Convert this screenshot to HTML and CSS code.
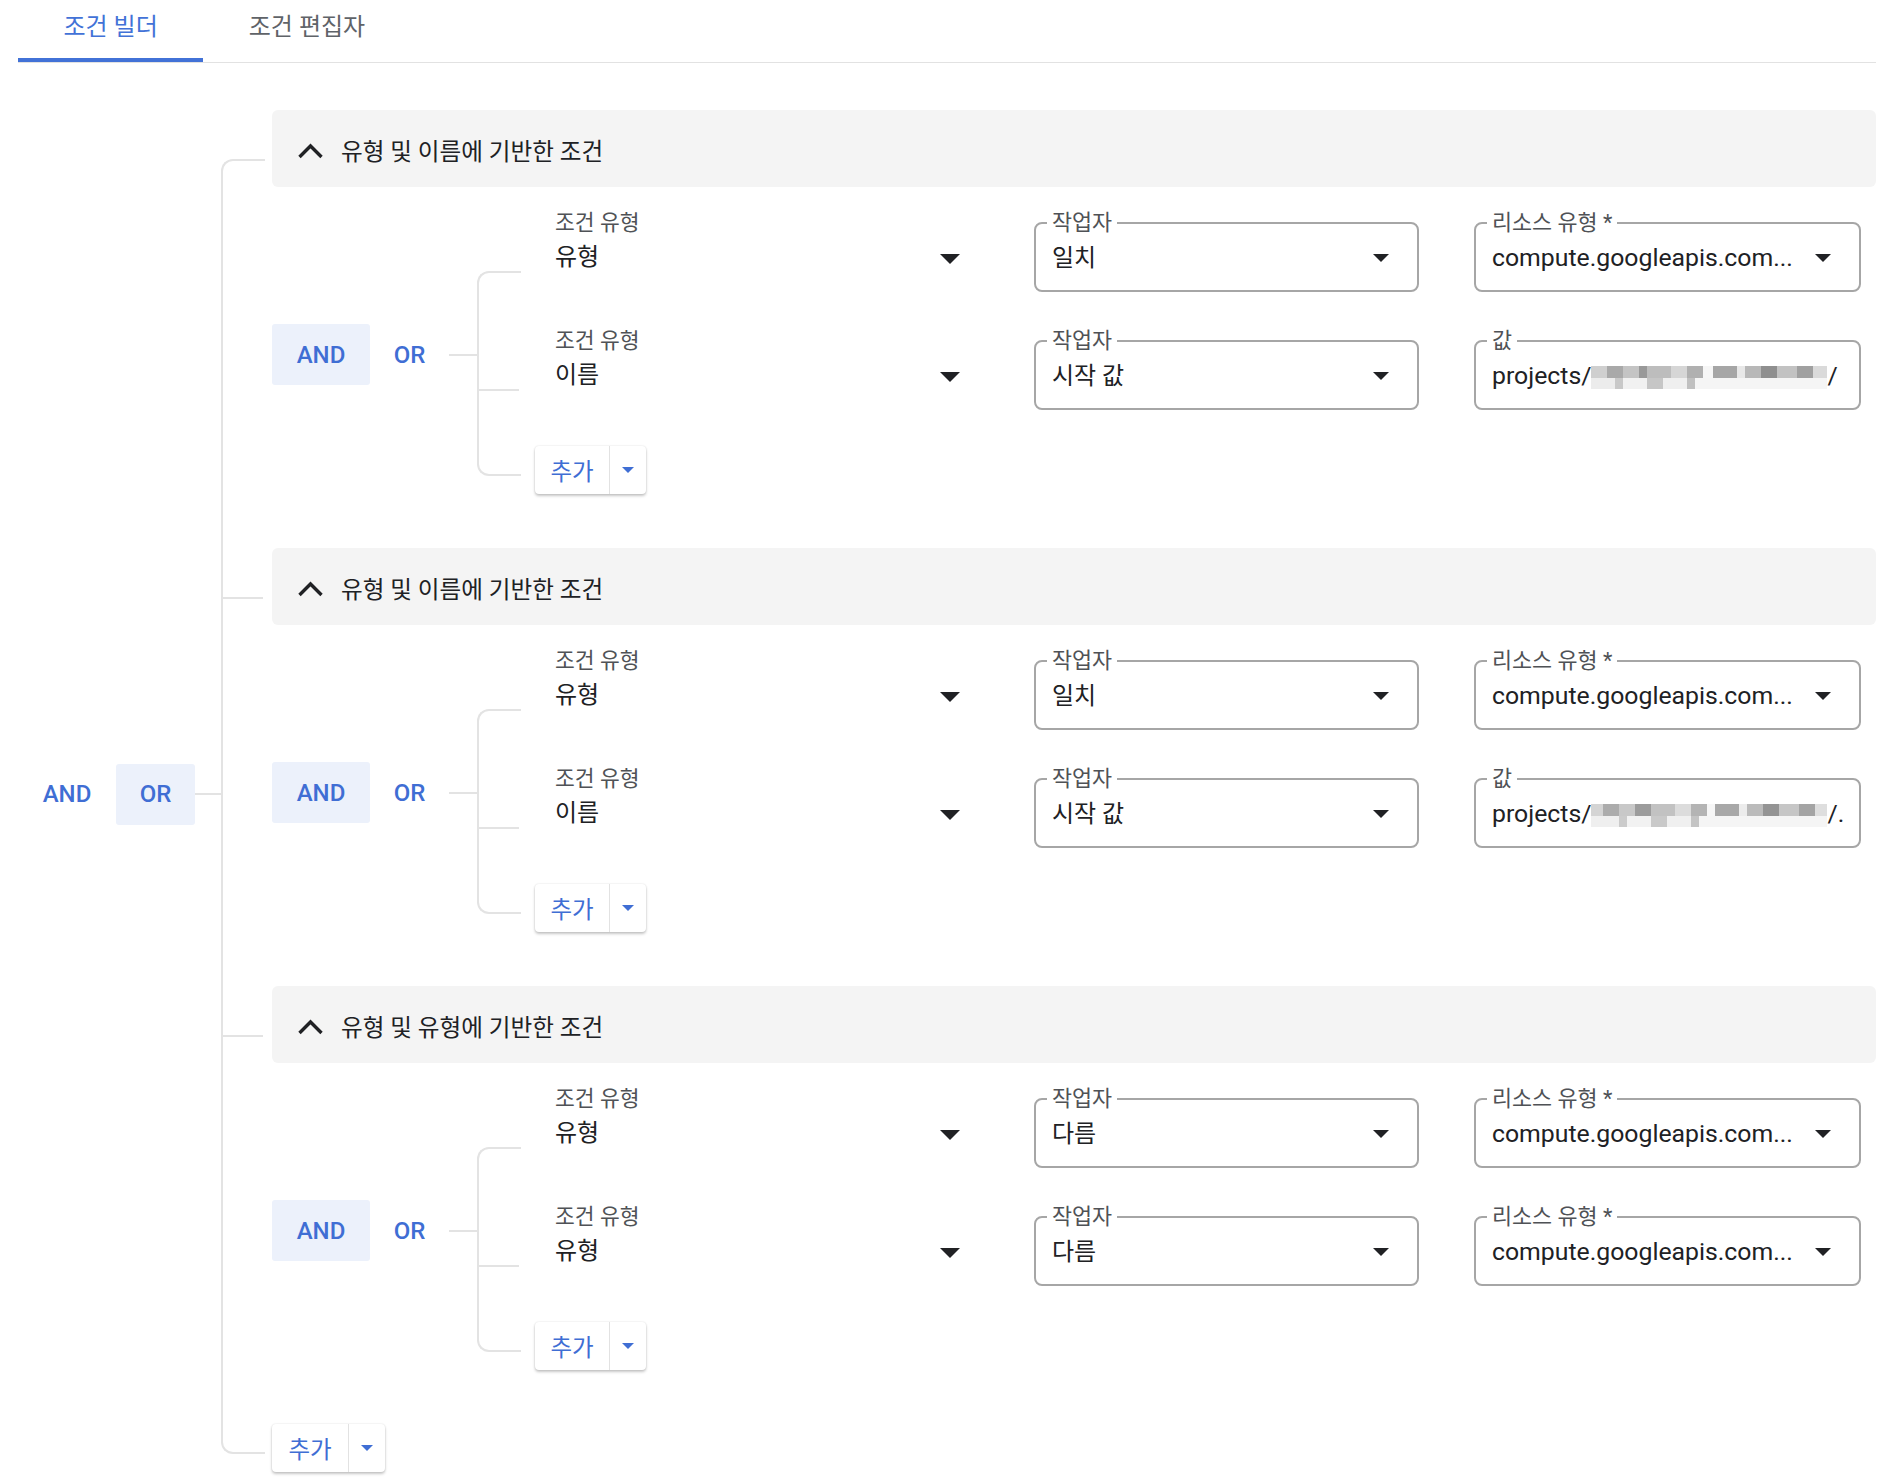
FILE: index.html
```html
<!DOCTYPE html>
<html lang="ko">
<head>
<meta charset="utf-8">
<title>조건 빌더</title>
<link rel="stylesheet" href="styles.css">
</head>
<body>
<div class="page">
  <nav class="tabs">
    <div class="tab active">조건 빌더</div>
    <div class="tab">조건 편집자</div>
  </nav>

  <div class="builder">
    <div class="toggle">
      <span class="op and">AND</span>
      <span class="op or on">OR</span>
    </div>
    <div class="stub stub-outer"></div>

    <div class="tree outer">
      <!-- group 1 -->
      <div class="node group">
        <div class="group-head">
          <svg class="chev" width="27" height="16" viewBox="0 0 27 16"><path d="M2.5 14 L13.5 3 L24.5 14" fill="none" stroke="#202124" stroke-width="3.4"/></svg>
          <span class="title">유형 및 이름에 기반한 조건</span>
        </div>
        <div class="group-body">
          <div class="toggle">
            <span class="op and on">AND</span>
            <span class="op or">OR</span>
          </div>
          <div class="stub stub-inner"></div>
          <div class="tree inner">
            <div class="node row">
              <div class="sel">
                <div class="lbl">조건 유형</div>
                <div class="val-row"><span class="val">유형</span><i class="caret"></i></div>
              </div>
              <fieldset class="field">
                <legend>작업자</legend>
                <div class="val-row"><span class="val">일치</span><i class="caret sm"></i></div>
              </fieldset>
              <fieldset class="field wide">
                <legend>리소스 유형 *</legend>
                <div class="val-row"><span class="val latin">compute.googleapis.com...</span><i class="caret sm"></i></div>
              </fieldset>
            </div>
            <div class="node row">
              <div class="sel">
                <div class="lbl">조건 유형</div>
                <div class="val-row"><span class="val">이름</span><i class="caret"></i></div>
              </div>
              <fieldset class="field">
                <legend>작업자</legend>
                <div class="val-row"><span class="val">시작 값</span><i class="caret sm"></i></div>
              </fieldset>
              <fieldset class="field wide input">
                <legend>값</legend>
                <div class="val-row"><span class="val latin">projects/<span class="blur"></span>/</span></div>
              </fieldset>
            </div>
            <div class="node add-node">
              <button class="add"><span class="main">추가</span><span class="drop"><i></i></span></button>
            </div>
          </div>
        </div>
      </div>

      <!-- group 2 -->
      <div class="node group">
        <div class="group-head">
          <svg class="chev" width="27" height="16" viewBox="0 0 27 16"><path d="M2.5 14 L13.5 3 L24.5 14" fill="none" stroke="#202124" stroke-width="3.4"/></svg>
          <span class="title">유형 및 이름에 기반한 조건</span>
        </div>
        <div class="group-body">
          <div class="toggle">
            <span class="op and on">AND</span>
            <span class="op or">OR</span>
          </div>
          <div class="stub stub-inner"></div>
          <div class="tree inner">
            <div class="node row">
              <div class="sel">
                <div class="lbl">조건 유형</div>
                <div class="val-row"><span class="val">유형</span><i class="caret"></i></div>
              </div>
              <fieldset class="field">
                <legend>작업자</legend>
                <div class="val-row"><span class="val">일치</span><i class="caret sm"></i></div>
              </fieldset>
              <fieldset class="field wide">
                <legend>리소스 유형 *</legend>
                <div class="val-row"><span class="val latin">compute.googleapis.com...</span><i class="caret sm"></i></div>
              </fieldset>
            </div>
            <div class="node row">
              <div class="sel">
                <div class="lbl">조건 유형</div>
                <div class="val-row"><span class="val">이름</span><i class="caret"></i></div>
              </div>
              <fieldset class="field">
                <legend>작업자</legend>
                <div class="val-row"><span class="val">시작 값</span><i class="caret sm"></i></div>
              </fieldset>
              <fieldset class="field wide input">
                <legend>값</legend>
                <div class="val-row"><span class="val latin">projects/<span class="blur alt"></span>/.</span></div>
              </fieldset>
            </div>
            <div class="node add-node">
              <button class="add"><span class="main">추가</span><span class="drop"><i></i></span></button>
            </div>
          </div>
        </div>
      </div>

      <!-- group 3 -->
      <div class="node group">
        <div class="group-head">
          <svg class="chev" width="27" height="16" viewBox="0 0 27 16"><path d="M2.5 14 L13.5 3 L24.5 14" fill="none" stroke="#202124" stroke-width="3.4"/></svg>
          <span class="title">유형 및 유형에 기반한 조건</span>
        </div>
        <div class="group-body">
          <div class="toggle">
            <span class="op and on">AND</span>
            <span class="op or">OR</span>
          </div>
          <div class="stub stub-inner"></div>
          <div class="tree inner">
            <div class="node row">
              <div class="sel">
                <div class="lbl">조건 유형</div>
                <div class="val-row"><span class="val">유형</span><i class="caret"></i></div>
              </div>
              <fieldset class="field">
                <legend>작업자</legend>
                <div class="val-row"><span class="val">다름</span><i class="caret sm"></i></div>
              </fieldset>
              <fieldset class="field wide">
                <legend>리소스 유형 *</legend>
                <div class="val-row"><span class="val latin">compute.googleapis.com...</span><i class="caret sm"></i></div>
              </fieldset>
            </div>
            <div class="node row">
              <div class="sel">
                <div class="lbl">조건 유형</div>
                <div class="val-row"><span class="val">유형</span><i class="caret"></i></div>
              </div>
              <fieldset class="field">
                <legend>작업자</legend>
                <div class="val-row"><span class="val">다름</span><i class="caret sm"></i></div>
              </fieldset>
              <fieldset class="field wide">
                <legend>리소스 유형 *</legend>
                <div class="val-row"><span class="val latin">compute.googleapis.com...</span><i class="caret sm"></i></div>
              </fieldset>
            </div>
            <div class="node add-node">
              <button class="add"><span class="main">추가</span><span class="drop"><i></i></span></button>
            </div>
          </div>
        </div>
      </div>

      <!-- outer add -->
      <div class="node add-node">
        <button class="add outer-add"><span class="main">추가</span><span class="drop"><i></i></span></button>
      </div>
    </div>
  </div>
</div>
</body>
</html>
```

FILE: styles.css
```css
* { box-sizing: border-box; }

html, body {
  margin: 0;
  background: #ffffff;
}

body {
  font-family: Roboto, "Noto Sans CJK KR", sans-serif;
  color: #202124;
}

.page {
  padding: 0 16px 0 18px;
}

/* ---------- tabs ---------- */
.tabs {
  display: flex;
  height: 63px;
  border-bottom: 1px solid #e2e2e2;
}

.tab {
  height: 62px;
  padding: 0 45.5px 9px;
  display: flex;
  align-items: center;
  font-size: 24px;
  color: #5f6368;
  border-bottom: 4px solid transparent;
}

.tab.active {
  color: #4272d7;
  border-bottom-color: #4272d7;
}

/* ---------- builder ---------- */
.builder {
  display: flex;
  align-items: center;
  margin-top: 47px;
}

.toggle {
  display: flex;
  flex: none;
}

.op {
  height: 61px;
  display: flex;
  align-items: center;
  justify-content: center;
  font-size: 24px;
  font-weight: 500;
  color: #3f6ed4;
  border-radius: 3px;
}

.op.and { width: 98px; }
.op.or { width: 79px; }
.op.on { background: #ecf1fb; }

.stub {
  flex: none;
  height: 2px;
  background: #e3e3e3;
}

.stub-outer { width: 26px; }
.stub-inner { width: 28px; }

/* ---------- tree connectors ---------- */
.tree {
  flex: 1;
  min-width: 0;
}

.node {
  position: relative;
}

.outer > .node {
  padding-left: 51px;
  --branch: 49px;
}

.outer > .add-node {
  --branch: calc(50% - 1px);
}

.inner > .node {
  padding-left: 58px;
  --branch: calc(50% - 1px);
}

.node::before {
  content: "";
  position: absolute;
  left: 0;
  top: 0;
  bottom: 0;
  border-left: 2px solid #e3e3e3;
}

.node::after {
  content: "";
  position: absolute;
  left: 0;
  top: var(--branch);
  width: 42px;
  border-top: 2px solid #e3e3e3;
}

.node:first-child::before {
  top: var(--branch);
  width: 42px;
  border-top: 2px solid #e3e3e3;
  border-top-left-radius: 12px;
}

.node:last-child::before {
  bottom: auto;
  height: calc(var(--branch) + 2px);
  width: 42px;
  border-bottom: 2px solid #e3e3e3;
  border-bottom-left-radius: 12px;
}

.node:first-child::after,
.node:last-child::after {
  display: none;
}

/* ---------- groups ---------- */
.group {
  padding-bottom: 52px;
}

.group-head {
  height: 77px;
  background: #f4f4f4;
  border-radius: 6px;
  display: flex;
  align-items: center;
  gap: 17px;
  padding: 2px 0 0 25px;
}

.chev { flex: none; margin-top: 2px; }

.title {
  font-size: 23.6px;
  color: #202124;
}

.group-body {
  display: flex;
  align-items: center;
  margin-top: 26px;
}

/* ---------- rows ---------- */
.row {
  height: 118px;
  display: flex;
  align-items: flex-start;
  gap: 55px;
}

.inner > .add-node { height: 47px; }
.outer > .add-node { height: 54px; }

.sel {
  flex: none;
  width: 444px;
  padding: 0 19px 0 20px;
}

.lbl {
  font-size: 21.5px;
  line-height: 20px;
  color: #4f5256;
}

.sel .val-row {
  margin-top: 9px;
}

.val-row {
  display: flex;
  align-items: center;
  gap: 20px;
  height: 30px;
}

.val {
  flex: 1;
  min-width: 0;
  font-size: 24px;
  line-height: 30px;
  white-space: nowrap;
  overflow: hidden;
  text-overflow: ellipsis;
  color: #202124;
}

.val.latin {
  font-size: 24.8px;
}

.field.input .val {
  overflow: visible;
  text-overflow: clip;
}

.caret {
  flex: none;
  width: 0;
  height: 0;
  margin-top: 3px;
  border-left: 10px solid transparent;
  border-right: 10px solid transparent;
  border-top: 10px solid #202124;
}

.caret.sm {
  margin-top: 0;
  border-left-width: 8.5px;
  border-right-width: 8.5px;
  border-top-width: 8px;
}

.field {
  flex: none;
  width: 385px;
  margin: 0;
  min-width: 0;
  border: 2px solid #a6a6a6;
  border-radius: 8px;
  padding: 10px 28px 17px 16px;
}

.field.wide { width: 387px; }
.field.input { padding-right: 10px; }

.field legend {
  font-size: 21.8px;
  line-height: 20px;
  padding: 0 5px;
  margin-left: -5px;
  color: #4f5256;
}

/* pixelated redaction */
.blur {
  display: inline-block;
  width: 236px;
  height: 23px;
  vertical-align: -5px;
  background:
    linear-gradient(90deg, #cfcfcf 0 16px, #a9a9a9 16px 32px, #c4c4c4 32px 48px, #999999 48px 56px, #bdbdbd 56px 80px, #d6d6d6 80px 96px, #b0b0b0 96px 112px, #f6f6f6 112px 122px, #a6a6a6 122px 146px, #e8e8e8 146px 154px, #b8b8b8 154px 170px, #8f8f8f 170px 186px, #c2c2c2 186px 206px, #a0a0a0 206px 222px, #dadada 222px 236px) top / 100% 12px no-repeat,
    linear-gradient(90deg, #ececec 0 24px, #c8c8c8 24px 32px, #f1f1f1 32px 56px, #c6c6c6 56px 72px, #efefef 72px 96px, #c0c0c0 96px 104px, #f5f5f5 104px 236px) bottom / 100% 11px no-repeat;
}

.blur.alt {
  background:
    linear-gradient(90deg, #d4d4d4 0 12px, #acacac 12px 28px, #c8c8c8 28px 44px, #9c9c9c 44px 60px, #c2c2c2 60px 84px, #dcdcdc 84px 100px, #b4b4b4 100px 116px, #f6f6f6 116px 124px, #a8a8a8 124px 148px, #ececec 148px 156px, #bbbbbb 156px 172px, #949494 172px 188px, #c6c6c6 188px 208px, #a4a4a4 208px 224px, #dedede 224px 236px) top / 100% 12px no-repeat,
    linear-gradient(90deg, #efefef 0 28px, #cbcbcb 28px 36px, #f2f2f2 36px 60px, #c9c9c9 60px 76px, #f0f0f0 76px 100px, #c4c4c4 100px 108px, #f5f5f5 108px 236px) bottom / 100% 11px no-repeat;
}

/* ---------- add split button ---------- */
.add {
  display: inline-flex;
  height: 48px;
  margin-top: -3px;
  padding: 0;
  border: 0;
  background: #ffffff;
  border-radius: 4px;
  font-family: inherit;
  box-shadow: 0 2px 3px rgba(0, 0, 0, 0.22), 0 0 2px rgba(0, 0, 0, 0.12);
}

.outer-add { margin-top: 0; }

.add .main {
  width: 75px;
  display: flex;
  align-items: center;
  justify-content: center;
  font-size: 23.5px;
  color: #3f6ed4;
  border-right: 1px solid #e2e2e2;
}

.outer-add .main { width: 77px; }

.add .drop {
  width: 36px;
  display: flex;
  align-items: center;
  justify-content: center;
}

.add .drop i {
  width: 0;
  height: 0;
  border-left: 6px solid transparent;
  border-right: 6px solid transparent;
  border-top: 6px solid #3f6ed4;
}
```
